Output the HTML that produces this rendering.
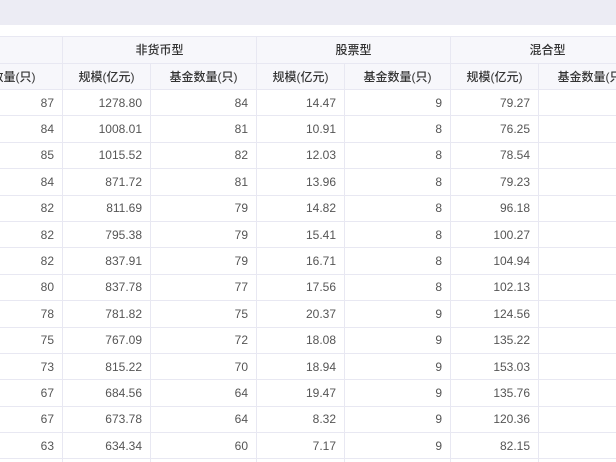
<!DOCTYPE html><html><head><style>
body{margin:0;width:616px;height:462px;overflow:hidden;background:#fff;font-family:"Liberation Sans","Noto Sans CJK SC",sans-serif;}
.wrap{position:relative;width:616px;height:462px;overflow:hidden;}
.top{height:25px;background:#ececf4;}
table{position:absolute;left:-60px;top:36px;border-collapse:collapse;table-layout:fixed;width:704px;}
td,th{border:1px solid #e8e8f2;font-size:12px;height:26.4px;padding:0 8px;box-sizing:border-box;white-space:nowrap;}
th{background:#f7f7fb;color:#333;font-weight:500;text-align:center;height:26.5px;}
td{color:#555;text-align:right;}
</style></head><body><div class="wrap"><div class="top"></div>
<table>
<colgroup><col style="width:122px"><col style="width:88px"><col style="width:106px"><col style="width:88px"><col style="width:106px"><col style="width:88px"><col style="width:106px"></colgroup>
<tr><th></th><th colspan="2">非货币型</th><th colspan="2">股票型</th><th colspan="2">混合型</th></tr>
<tr><th>基金数量(只)</th><th>规模(亿元)</th><th>基金数量(只)</th><th>规模(亿元)</th><th>基金数量(只)</th><th>规模(亿元)</th><th>基金数量(只)</th></tr>
<tr><td>87</td><td>1278.80</td><td>84</td><td>14.47</td><td>9</td><td>79.27</td><td></td></tr>
<tr><td>84</td><td>1008.01</td><td>81</td><td>10.91</td><td>8</td><td>76.25</td><td></td></tr>
<tr><td>85</td><td>1015.52</td><td>82</td><td>12.03</td><td>8</td><td>78.54</td><td></td></tr>
<tr><td>84</td><td>871.72</td><td>81</td><td>13.96</td><td>8</td><td>79.23</td><td></td></tr>
<tr><td>82</td><td>811.69</td><td>79</td><td>14.82</td><td>8</td><td>96.18</td><td></td></tr>
<tr><td>82</td><td>795.38</td><td>79</td><td>15.41</td><td>8</td><td>100.27</td><td></td></tr>
<tr><td>82</td><td>837.91</td><td>79</td><td>16.71</td><td>8</td><td>104.94</td><td></td></tr>
<tr><td>80</td><td>837.78</td><td>77</td><td>17.56</td><td>8</td><td>102.13</td><td></td></tr>
<tr><td>78</td><td>781.82</td><td>75</td><td>20.37</td><td>9</td><td>124.56</td><td></td></tr>
<tr><td>75</td><td>767.09</td><td>72</td><td>18.08</td><td>9</td><td>135.22</td><td></td></tr>
<tr><td>73</td><td>815.22</td><td>70</td><td>18.94</td><td>9</td><td>153.03</td><td></td></tr>
<tr><td>67</td><td>684.56</td><td>64</td><td>19.47</td><td>9</td><td>135.76</td><td></td></tr>
<tr><td>67</td><td>673.78</td><td>64</td><td>8.32</td><td>9</td><td>120.36</td><td></td></tr>
<tr><td>63</td><td>634.34</td><td>60</td><td>7.17</td><td>9</td><td>82.15</td><td></td></tr>
<tr><td></td><td></td><td></td><td></td><td></td><td></td><td></td></tr>
</table></div></body></html>
